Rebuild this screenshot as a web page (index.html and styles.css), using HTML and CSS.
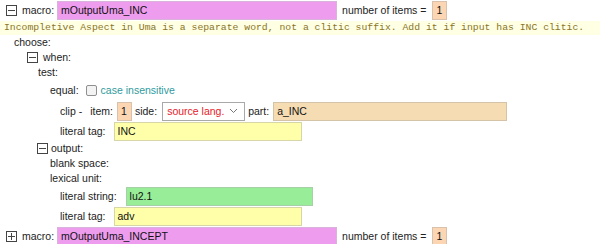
FILE: index.html
```html
<!DOCTYPE html>
<html>
<head>
<meta charset="utf-8">
<link rel="stylesheet" href="styles.css">
</head>
<body>
<div class="macro">
  <div class="row f top">
    <span class="tog"><svg width="11" height="11" viewBox="0 0 11 11"><rect x="0.5" y="0.5" width="10" height="10" fill="#fff" stroke="#444"/><path d="M2 5.5H9" stroke="#444"/></svg></span>
    <span class="lbl">macro:</span>
    <span class="fld pink mname">mOutputUma_INC</span>
    <span class="lbl nlbl">number of items =</span>
    <span class="fld num">1</span>
  </div>
  <div class="comment">Incompletive Aspect in Uma is a separate word, not a clitic suffix. Add it if input has INC clitic.</div>
  <div class="tree">
    <div class="row">choose:</div>
    <div class="kids k-choose">
      <div class="row">
        <span class="tog"><svg width="11" height="11" viewBox="0 0 11 11"><rect x="0.5" y="0.5" width="10" height="10" fill="#fff" stroke="#444"/><path d="M2 5.5H9" stroke="#444"/></svg></span>
        <span class="lbl">when:</span>
      </div>
      <div class="kids k-when">
        <div class="row">test:</div>
        <div class="kids k-12">
          <div class="row eq">
            <span class="lbl">equal:</span>
            <span class="chk"></span>
            <span class="ci">case insensitive</span>
          </div>
          <div class="kids k-10">
            <div class="row f">
              <span class="lbl">clip -</span>
              <span class="lbl item">item:</span>
              <span class="fld num inum">1</span>
              <span class="lbl side">side:</span>
              <span class="sel">source lang.<svg class="chev" width="9" height="6" viewBox="0 0 9 6"><path d="M1 1L4.5 4.5L8 1" fill="none" stroke="#777" stroke-width="1"/></svg></span>
              <span class="lbl part">part:</span>
              <span class="fld wheat pfld">a_INC</span>
            </div>
            <div class="row f">
              <span class="lbl">literal tag:</span>
              <span class="fld yellow tfld">INC</span>
            </div>
          </div>
        </div>
        <div class="row out">
          <span class="tog"><svg width="11" height="11" viewBox="0 0 11 11"><rect x="0.5" y="0.5" width="10" height="10" fill="#fff" stroke="#444"/><path d="M2 5.5H9" stroke="#444"/></svg></span>
          <span class="lbl">output:</span>
        </div>
        <div class="kids k-12">
          <div class="row">blank space:</div>
          <div class="row">lexical unit:</div>
          <div class="kids k-10">
            <div class="row f">
              <span class="lbl">literal string:</span>
              <span class="fld green sfld">lu2.1</span>
            </div>
            <div class="row f">
              <span class="lbl">literal tag:</span>
              <span class="fld yellow tfld">adv</span>
            </div>
          </div>
        </div>
      </div>
    </div>
  </div>
</div>
<div class="macro">
  <div class="row f top2">
    <span class="tog"><svg width="11" height="11" viewBox="0 0 11 11"><rect x="0.5" y="0.5" width="10" height="10" fill="#fff" stroke="#444"/><path d="M2 5.5H9M5.5 2V9" stroke="#444"/></svg></span>
    <span class="lbl">macro:</span>
    <span class="fld pink mname">mOutputUma_INCEPT</span>
    <span class="lbl nlbl">number of items =</span>
    <span class="fld num">1</span>
  </div>
</div>
</body>
</html>
```

FILE: styles.css
```css
* { box-sizing: border-box; }
html, body { margin: 0; padding: 0; background: #fff; }
body {
  font-family: "Liberation Sans", Arial, sans-serif;
  font-size: 10.5px;
  color: #222;
  width: 600px;
  height: 244px;
  overflow: hidden;
}
.row {
  display: flex;
  align-items: center;
  height: 15px;
  line-height: 15px;
  white-space: nowrap;
}
.row.f { height: 20px; }
.row.top { height: 21px; padding-left: 6px; }
.row.top2 { height: 20px; padding-left: 6px; padding-top: 1px; }
.tog { display: inline-flex; width: 11px; height: 11px; margin-right: 5px; }
.tog svg { display: block; }
.fld {
  display: inline-flex;
  align-items: center;
  height: 19px;
  padding: 0 3px;
  border: 1px solid #c8c8c8;
  color: #111;
}
.pink { background: #ee9cee; border-color: #d9b3d9; }
.mname { width: 280px; margin-left: 3px; }
.nlbl { margin-left: 5px; }
.num { background: #fcd6b3; border-color: #d9c2ad; width: 15px; margin-left: 6px; }
.comment {
  height: 14px;
  line-height: 14px;
  padding-left: 4px;
  font-family: "Liberation Mono", "Courier New", monospace;
  font-size: 9.77px;
  color: #8a7526;
  background: #ffffe3;
  white-space: nowrap;
}
.tree { padding-left: 14px; }
.k-choose { padding-left: 13px; }
.k-when { padding-left: 11px; }
.k-12 { padding-left: 12px; }
.k-10 { padding-left: 10px; }
.row.eq { height: 21px; }
.chk {
  display: inline-block;
  width: 11px;
  height: 11px;
  margin-left: 7px;
  border: 1px solid #8f8f8f;
  border-radius: 2px;
  background: #f3f3f3;
}
.ci { color: #2f9a9e; margin-left: 4px; }
.item { margin-left: 8px; }
.inum { margin-left: 4px; width: 15px; }
.side { margin-left: 3px; }
.sel {
  display: inline-flex;
  align-items: center;
  justify-content: space-between;
  width: 83px;
  height: 19px;
  margin-left: 5px;
  padding: 0 6px 0 4px;
  border: 1px solid #a9a9a9;
  background: #fff;
  color: #e8202a;
}
.chev { display: block; }
.part { margin-left: 3px; }
.wheat { background: #f5dcb3; border-color: #d4c3a6; }
.pfld { width: 234px; margin-left: 4px; }
.yellow { background: #ffffaa; border-color: #d6d6a8; }
.tfld { width: 188px; margin-left: 8px; }
.green { background: #98ee98; border-color: #a8d0a8; }
.sfld { width: 187px; margin-left: 9px; }
.row.out { margin-left: -1px; }
.row.out .tog { margin-right: 3px; }
```
